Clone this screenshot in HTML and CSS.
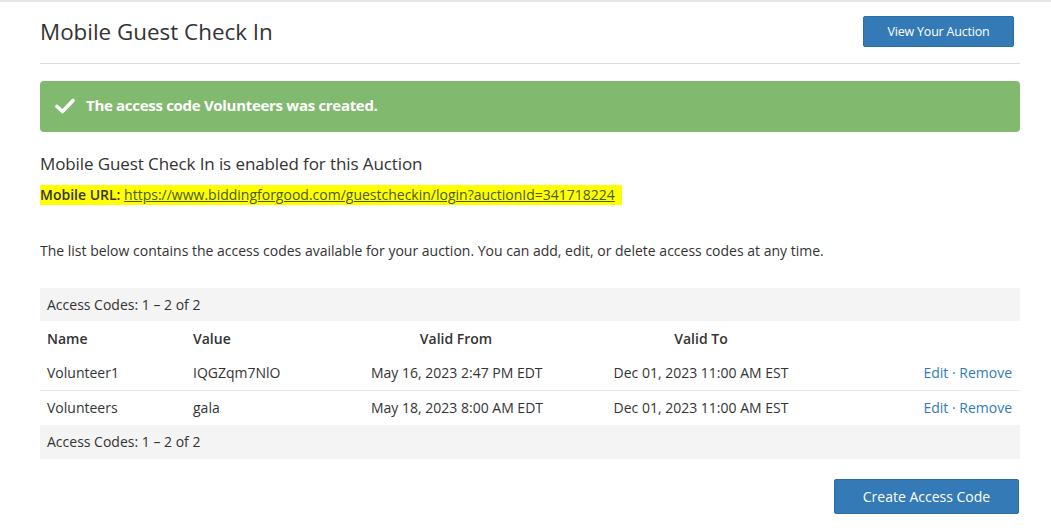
FILE: index.html
```html
<!DOCTYPE html>
<html lang="en">
<head>
<meta charset="utf-8">
<title>Mobile Guest Check In</title>
<link rel="stylesheet" href="styles.css">
</head>
<body>
<div class="page">
  <header class="page-header">
    <h1 class="page-title">Mobile Guest Check In</h1>
    <a class="btn btn-small" href="#">View Your Auction</a>
  </header>

  <div class="alert-success">
    <svg class="alert-check" viewBox="0 0 20 16" width="20" height="16" aria-hidden="true">
      <path d="M2 8.5 L7.5 13.5 L18 2.5" fill="none" stroke="#fff" stroke-width="3.6" stroke-linecap="round" stroke-linejoin="round"/>
    </svg>
    <span>The access code Volunteers was created.</span>
  </div>

  <h2 class="section-title">Mobile Guest Check In is enabled for this Auction</h2>
  <p class="mobile-url"><span class="highlight"><span class="url-label">Mobile URL:</span> <a class="url-link" href="#">https://www.biddingforgood.com/guestcheckin/login?auctionId=341718224</a>&nbsp;&nbsp;</span></p>

  <p class="intro">The list below contains the access codes available for your auction. You can add, edit, or delete access codes at any time.</p>

  <div class="codes">
    <div class="codes-bar">Access Codes: 1 – 2 of 2</div>
    <table class="codes-table">
      <colgroup>
        <col class="c-name"><col class="c-value"><col class="c-from"><col class="c-to"><col class="c-actions">
      </colgroup>
      <thead>
        <tr>
          <th>Name</th>
          <th>Value</th>
          <th class="center">Valid From</th>
          <th class="center">Valid To</th>
          <th></th>
        </tr>
      </thead>
      <tbody>
        <tr>
          <td>Volunteer1</td>
          <td>IQGZqm7NlO</td>
          <td class="center">May 16, 2023 2:47 PM EDT</td>
          <td class="center">Dec 01, 2023 11:00 AM EST</td>
          <td class="right"><a href="#" class="act">Edit</a> · <a href="#" class="act">Remove</a></td>
        </tr>
        <tr>
          <td>Volunteers</td>
          <td>gala</td>
          <td class="center">May 18, 2023 8:00 AM EDT</td>
          <td class="center">Dec 01, 2023 11:00 AM EST</td>
          <td class="right"><a href="#" class="act">Edit</a> · <a href="#" class="act">Remove</a></td>
        </tr>
      </tbody>
    </table>
    <div class="codes-bar codes-bar-bottom">Access Codes: 1 – 2 of 2</div>
  </div>

  <div class="footer-actions">
    <a class="btn btn-large" href="#">Create Access Code</a>
  </div>
</div>
</body>
</html>
```

FILE: styles.css
```css
* { box-sizing: border-box; }

html, body {
  margin: 0;
  padding: 0;
  background: #fff;
}

body {
  font-family: "Open Sans", "Noto Sans", "Liberation Sans", sans-serif;
  color: #333;
  font-size: 14px;
  border-top: 2px solid #e6e6e6;
}

.page {
  padding: 0 31px 0 40px;
}

.page-header {
  display: flex;
  align-items: center;
  justify-content: space-between;
  padding: 14px 6px 16px 0;
  border-bottom: 1px solid #dddddd;
}

.page-title {
  margin: 0;
  font-size: 22.4px;
  font-weight: 400;
  line-height: 30px;
  color: #333;
}

.btn {
  display: inline-flex;
  align-items: center;
  justify-content: center;
  background: #337ab7;
  border: 1px solid #2e6da4;
  border-radius: 2px;
  color: #fff;
  text-decoration: none;
}

.btn-small {
  width: 151px;
  height: 31px;
  font-size: 12.5px;
  letter-spacing: -0.2px;
}

.btn-large {
  width: 185px;
  height: 35px;
  font-size: 14px;
}

.alert-success {
  margin-top: 17px;
  height: 51px;
  background: #81b96e;
  border-radius: 4px;
  display: flex;
  align-items: center;
  gap: 11px;
  padding: 0 0 3px 15px;
  color: #fff;
  font-size: 15px;
  font-weight: 700;
  letter-spacing: -0.3px;
}

.alert-check {
  display: block;
  margin-top: 1px;
}

.section-title {
  margin: 21px 0 0;
  font-size: 17px;
  font-weight: 400;
  line-height: 22px;
  letter-spacing: -0.1px;
  color: #333;
}

.mobile-url {
  margin: 11px 0 0;
  line-height: 18px;
  font-size: 14px;
}

.highlight {
  background: #ffff00;
  padding: 0 0 1px;
}

.url-label {
  font-weight: 600;
}

.url-link {
  color: #4a5a1e;
  text-decoration: underline;
}

.intro {
  margin: 37px 0 0;
  line-height: 20px;
}

.codes {
  margin-top: 27px;
}

.codes-bar {
  background: #f4f4f4;
  height: 33px;
  line-height: 33px;
  padding-left: 7px;
}

.codes-bar-bottom {
  height: 34px;
  line-height: 34px;
}

.codes-table {
  width: 100%;
  border-collapse: collapse;
  table-layout: fixed;
}

.c-name { width: 146px; }
.c-value { width: 178px; }
.c-from { width: 184px; }
.c-to { width: 306px; }
.c-actions { width: 166px; }

.codes-table th,
.codes-table td {
  padding: 0 7px;
  text-align: left;
  white-space: nowrap;
}

.codes-table th {
  height: 35px;
  font-weight: 600;
}

.codes-table td {
  height: 35px;
}

.codes-table tbody tr:first-child td {
  height: 34px;
  border-bottom: 1px solid #e8e8e8;
}

.codes-table .center { text-align: center; }
.codes-table .right { text-align: right; padding-right: 8px; color: #337ab7; }

.act {
  color: #337ab7;
  text-decoration: none;
}

.footer-actions {
  display: flex;
  justify-content: flex-end;
  padding-right: 1px;
  margin-top: 20px;
}
```
